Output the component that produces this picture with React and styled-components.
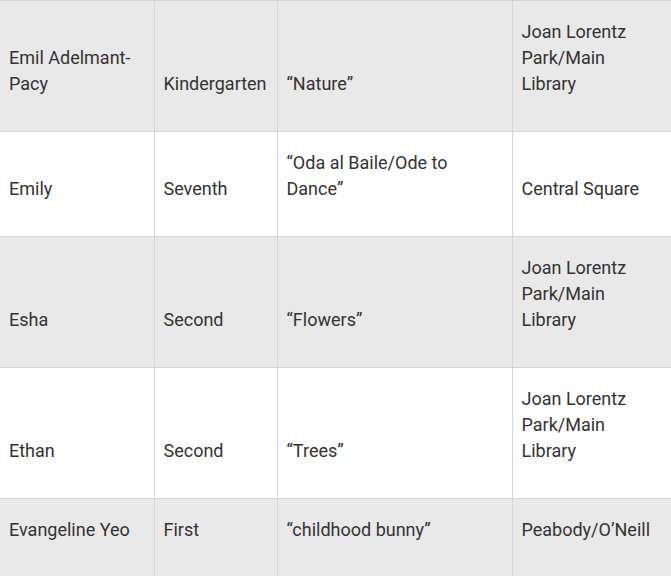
import React from 'react'
import styled, { createGlobalStyle } from 'styled-components'

const rows = [
  ['Emil Adelmant-Pacy', 'Kindergarten', '“Nature”', 'Joan Lorentz Park/Main Library'],
  ['Emily', 'Seventh', '“Oda al Baile/Ode to Dance”', 'Central Square'],
  ['Esha', 'Second', '“Flowers”', 'Joan Lorentz Park/Main Library'],
  ['Ethan', 'Second', '“Trees”', 'Joan Lorentz Park/Main Library'],
  ['Evangeline Yeo', 'First', '“childhood bunny”', 'Peabody/O’Neill'],
]

const widths = [154, 123, 235, 159]

const Global = createGlobalStyle`
  body {
    margin: 0;
    background: #fff;
    font-family: Roboto, "Liberation Sans", sans-serif;
  }
`

const Table = styled.table`
  border-collapse: collapse;
  table-layout: fixed;
  width: 671px;
  color: #333;
  font-size: 18px;
  line-height: 26px;
`

const Row = styled.tr`
  background: ${p => (p.$shade ? '#e9e9e9' : '#fff')};
`

const Cell = styled.td`
  border: 1px solid #d6d6d6;
  border-left: ${p => (p.$first ? 'none' : '1px solid #d6d6d6')};
  padding: 18px 10px 34px 9px;
  vertical-align: bottom;
  text-align: left;
`

const App = () => {
  return (
    <>
      <Global />
      <Table>
        <colgroup>
          {widths.map((w, i) => (
            <col key={i} style={{ width: w }} />
          ))}
        </colgroup>
        <tbody>
          {rows.map((r, i) => (
            <Row key={i} $shade={i % 2 === 0}>
              {r.map((c, j) => (
                <Cell key={j} $first={j === 0}>{c}</Cell>
              ))}
            </Row>
          ))}
        </tbody>
      </Table>
    </>
  )
}

export default App
